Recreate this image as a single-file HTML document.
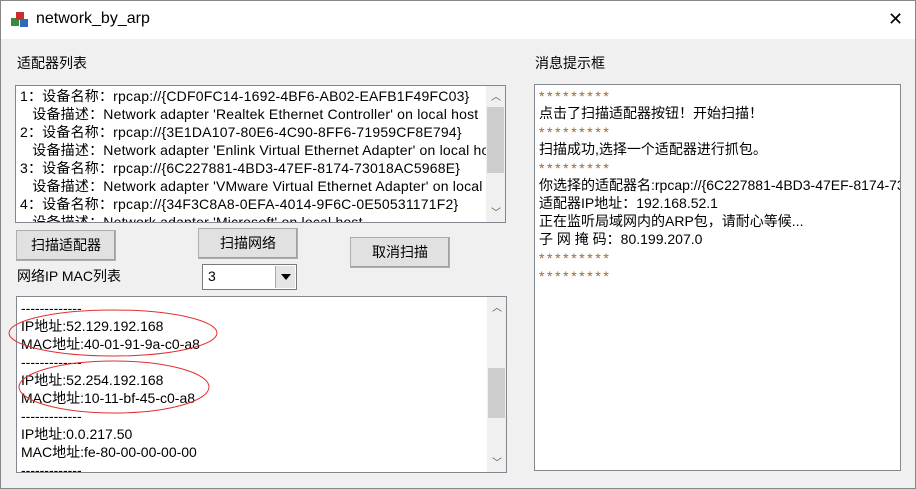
<!DOCTYPE html>
<html><head><meta charset="utf-8"><style>
*{margin:0;padding:0;box-sizing:border-box}
body{width:916px;height:489px;background:#f0f0f0;font-family:"Liberation Sans","Noto Sans CJK SC",sans-serif;font-size:14px;color:#000;position:relative;overflow:hidden;border:1px solid #888}
.abs{position:absolute}
.title{left:0;top:0;width:914px;height:38px;background:#fff}
.title span{position:absolute;left:35px;top:9px;font-size:16px}
.box{background:#fff;border:1px solid #828790;overflow:hidden}
.line{height:18px;line-height:18px;white-space:nowrap}
.btn{background:#e1e1e1;border:1px solid #adadad;box-shadow:inset -1px -1px 0 #a0a0a0;text-align:center;line-height:28px;font-size:14px}
.sb{background:#f0f0f0}
.star{color:#9a6a30;font-size:14px;letter-spacing:2.6px;height:18px;line-height:20px}
</style></head><body>
<div class="abs title"><svg class="abs" style="left:9px;top:9px" width="20" height="20" viewBox="0 0 20 20"><rect x="1" y="8" width="8" height="8" fill="#3a8a3a"/><rect x="6" y="2" width="8" height="8" fill="#c83030"/><rect x="10" y="9" width="8" height="8" fill="#2a6ab8"/></svg><span>network_by_arp</span>
<div class="abs" style="left:887px;top:8px;font-size:18px">✕</div></div>
<div class="abs" style="left:16px;top:52px">适配器列表</div>
<div class="abs" style="left:534px;top:52px">消息提示框</div>
<div class="abs box" style="left:14px;top:84px;width:491px;height:138px">
<div style="padding:1px 0 0 4px;letter-spacing:0.2px">
<div class="line">1：设备名称：rpcap://{CDF0FC14-1692-4BF6-AB02-EAFB1F49FC03}</div>
<div class="line">&nbsp;&nbsp;&nbsp;设备描述：Network adapter 'Realtek Ethernet Controller' on local host</div>
<div class="line">2：设备名称：rpcap://{3E1DA107-80E6-4C90-8FF6-71959CF8E794}</div>
<div class="line">&nbsp;&nbsp;&nbsp;设备描述：Network adapter 'Enlink Virtual Ethernet Adapter' on local host</div>
<div class="line">3：设备名称：rpcap://{6C227881-4BD3-47EF-8174-73018AC5968E}</div>
<div class="line">&nbsp;&nbsp;&nbsp;设备描述：Network adapter 'VMware Virtual Ethernet Adapter' on local host</div>
<div class="line">4：设备名称：rpcap://{34F3C8A8-0EFA-4014-9F6C-0E50531171F2}</div>
<div class="line">&nbsp;&nbsp;&nbsp;设备描述：Network adapter 'Microsoft' on local host</div>
</div>
<div class="abs sb" style="right:0;top:0;width:19px;height:136px"><div class="abs" style="left:5px;top:2px;font-size:10px;color:#555">︿</div><div class="abs" style="left:1px;top:21px;width:17px;height:66px;background:#cdcdcd"></div><div class="abs" style="left:5px;top:118px;font-size:10px;color:#555">﹀</div></div>
</div>
<div class="abs btn" style="left:15px;top:229px;width:100px;height:31px">扫描适配器</div>
<div class="abs btn" style="left:197px;top:227px;width:100px;height:31px">扫描网络</div>
<div class="abs btn" style="left:349px;top:236px;width:100px;height:31px">取消扫描</div>
<div class="abs" style="left:16px;top:265px">网络IP MAC列表</div>
<div class="abs box" style="left:201px;top:263px;width:95px;height:26px;border-color:#7a7a7a"><span class="abs" style="left:5px;top:3px">3</span><div class="abs" style="right:1px;top:1px;width:20px;height:22px;background:#e5e5e5;border-left:1px solid #aaa"><svg class="abs" style="left:5px;top:8px" width="10" height="6"><path d="M0 0H10L5 6Z" fill="#000"/></svg></div></div>
<div class="abs box" style="left:15px;top:295px;width:491px;height:177px">
<div style="padding:0 0 0 4px;margin-top:2px">
<div class="line">-------------</div>
<div class="line">IP地址:52.129.192.168</div>
<div class="line">MAC地址:40-01-91-9a-c0-a8</div>
<div class="line">-------------</div>
<div class="line">IP地址:52.254.192.168</div>
<div class="line">MAC地址:10-11-bf-45-c0-a8</div>
<div class="line">-------------</div>
<div class="line">IP地址:0.0.217.50</div>
<div class="line">MAC地址:fe-80-00-00-00-00</div>
<div class="line">-------------</div>
</div>
<div class="abs sb" style="right:0;top:0;width:19px;height:175px"><div class="abs" style="left:5px;top:2px;font-size:10px;color:#555">︿</div><div class="abs" style="left:1px;top:71px;width:17px;height:50px;background:#cdcdcd"></div><div class="abs" style="left:5px;top:157px;font-size:10px;color:#555">﹀</div></div>
</div>
<svg class="abs" style="left:0;top:290px" width="230" height="130"><ellipse cx="112" cy="42" rx="104" ry="23" fill="none" stroke="#e03030"/><ellipse cx="113" cy="96" rx="95" ry="26" fill="none" stroke="#e03030"/></svg>
<div class="abs box" style="left:533px;top:83px;width:367px;height:387px;border-color:#828790">
<div style="padding:1px 0 0 4px;white-space:nowrap">
<div class="star">*********</div>
<div class="line">点击了扫描适配器按钮！开始扫描！</div>
<div class="star">*********</div>
<div class="line">扫描成功,选择一个适配器进行抓包。</div>
<div class="star">*********</div>
<div class="line">你选择的适配器名:rpcap://{6C227881-4BD3-47EF-8174-73018AC5968E}</div>
<div class="line">适配器IP地址：192.168.52.1</div>
<div class="line">正在监听局域网内的ARP包，请耐心等候...</div>
<div class="line">子 网 掩 码：80.199.207.0</div>
<div class="star">*********</div>
<div class="star">*********</div>
</div></div>
</body></html>
